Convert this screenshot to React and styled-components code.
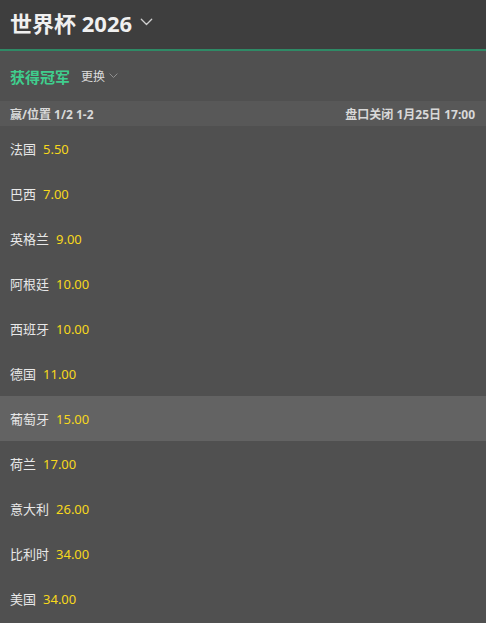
import React from "react";
import styled, { createGlobalStyle } from "styled-components";

const GlobalStyle = createGlobalStyle`
  html, body {
    margin: 0;
    padding: 0;
    background: #505050;
  }
  body {
    font-family: "Noto Sans", "Noto Sans CJK SC", sans-serif;
  }
`;

const teams = [
  { name: "法国", odds: "5.50" },
  { name: "巴西", odds: "7.00" },
  { name: "英格兰", odds: "9.00" },
  { name: "阿根廷", odds: "10.00" },
  { name: "西班牙", odds: "10.00" },
  { name: "德国", odds: "11.00" },
  { name: "葡萄牙", odds: "15.00", active: true },
  { name: "荷兰", odds: "17.00" },
  { name: "意大利", odds: "26.00" },
  { name: "比利时", odds: "34.00" },
  { name: "美国", odds: "34.00" },
];

const Chevron = ({ size = 12, color = "#ccc" }) => (
  <svg width={size} height={size * 0.6} viewBox="0 0 10 6" fill="none">
    <path d="M1 1l4 4 4-4" stroke={color} strokeWidth="1" strokeLinecap="round" strokeLinejoin="round" />
  </svg>
);

const App = () => {
  return (
    <Page>
      <GlobalStyle />
      <Header>
        <Title>世界杯 2026</Title>
        <Chevron size={13} color="#cfcfcf" />
      </Header>
      <MarketBar>
        <MarketName>获得冠军</MarketName>
        <Switch>
          更换 <Chevron size={9} color="#999" />
        </Switch>
      </MarketBar>
      <SubHeader>
        <span>赢/位置 1/2 1-2</span>
        <span>盘口关闭 1月25日 17:00</span>
      </SubHeader>
      <List>
        {teams.map((t) => (
          <Row key={t.name} $active={t.active}>
            <Name>{t.name}</Name>
            <Odds>{t.odds}</Odds>
          </Row>
        ))}
      </List>
    </Page>
  );
};

export default App;

const Page = styled.div`
  width: 486px;
  min-height: 623px;
  background: #505050;
  overflow: hidden;
`;

const Header = styled.div`
  height: 49px;
  box-sizing: border-box;
  background: #3e3e3e;
  border-bottom: 2px solid #2f8a66;
  display: flex;
  align-items: center;
  gap: 8px;
  padding: 0 10px 5px;
  box-sizing: content-box;
  height: 44px;
`;

const Title = styled.h1`
  margin: 0;
  font-size: 22px;
  font-weight: 700;
  color: #f0f0f0;
`;

const MarketBar = styled.div`
  height: 50px;
  display: flex;
  align-items: center;
  gap: 11px;
  padding: 0 10px;
`;

const MarketName = styled.span`
  color: #3fce8e;
  font-size: 15px;
  font-weight: 700;
`;

const Switch = styled.span`
  color: #dcdcdc;
  font-size: 12px;
  display: flex;
  align-items: center;
  gap: 4px;
`;

const SubHeader = styled.div`
  height: 25px;
  background: #585858;
  display: flex;
  align-items: center;
  justify-content: space-between;
  padding: 0 11px 0 10px;
  color: #d8d8d8;
  font-size: 12px;
  font-weight: 700;
`;

const List = styled.div`
  display: flex;
  flex-direction: column;
`;

const Row = styled.div`
  height: 45px;
  display: flex;
  align-items: center;
  gap: 7px;
  padding: 0 10px;
  background: ${(p) => (p.$active ? "#636363" : "transparent")};
`;

const Name = styled.span`
  color: #e8e8e8;
  font-size: 13px;
`;

const Odds = styled.span`
  color: #f7d81c;
  font-size: 13px;
`;
